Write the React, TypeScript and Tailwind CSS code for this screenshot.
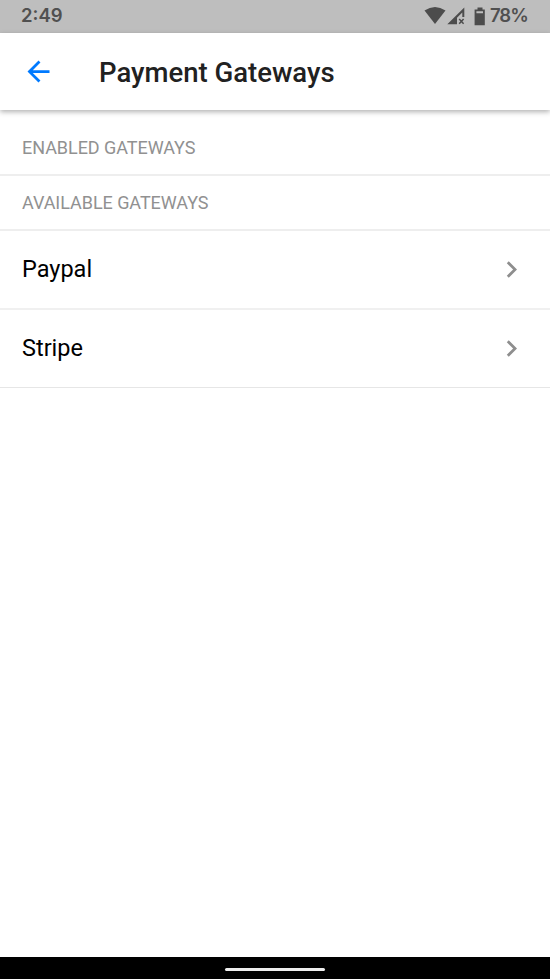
const rows = [
  { name: 'Paypal', line: 'h-[79px] border-b-2 border-[#f0f0f0]' },
  { name: 'Stripe', line: 'h-[78px] border-b border-[#e6e6e6]' },
];

export default function App() {
  return (
    <div className="flex h-[979px] w-[550px] flex-col bg-white font-['Roboto',sans-serif] text-black">
      <div className="flex h-[33px] items-center bg-[#bebebe] pr-[22px] pl-[21px] font-['Inter',sans-serif] text-[18.5px] font-semibold text-[#505050]">
        <span className="grow pb-[2px] leading-[31px]">2:49</span>
        <svg className="mr-px shrink-0" width="65" height="33" viewBox="0 0 65 33" fill="#4c4c4c">
          <path d="M0.5 10.6Q11 3.4 21.5 10.6L11 24Z" />
          <path d="M40.3 7.5V17H38.3V12.5L33 17.8V24.3H23.3Z" />
          <path d="M35.2 19L39.6 23.8M39.6 19L35.2 23.8" stroke="#4c4c4c" strokeWidth="1.5" />
          <path fillRule="evenodd" d="M53.5 7.6h5v1.9h2.3V25.2H50.6V9.5h2.9zM52.4 11.3v2h6.6v-2z" />
        </svg>
        <span className="pb-[2px] leading-[31px] tracking-[-0.9px]">78%</span>
      </div>
      <header className="z-10 flex h-[77px] shrink-0 items-center shadow-[0_2px_5px_rgba(0,0,0,0.3)]">
        <svg className="ml-[22px]" width="33" height="33" viewBox="0 0 24 24" fill="#007aff">
          <path d="M20 11H7.83l5.59-5.59L12 4l-8 8 8 8 1.41-1.41L7.83 13H20v-2z" />
        </svg>
        <h1 className="ml-[44px] pt-[2px] text-[27.5px] font-medium text-[#212121]">Payment Gateways</h1>
      </header>
      <h2 className="flex h-[66px] items-center border-b-2 border-[#eeeeee] px-[22px] pt-[11px] text-[18px] tracking-[-0.05px] text-[#919191]">ENABLED GATEWAYS</h2>
      <h2 className="flex h-[55px] items-center border-b-2 border-[#eeeeee] px-[22px] pb-[1px] text-[18px] tracking-[-0.05px] text-[#919191]">AVAILABLE GATEWAYS</h2>
      {rows.map(({ name, line }) => (
        <div key={name} className={`flex items-center justify-between px-[22px] text-[23.5px] ${line}`}>
          <span className="pt-[1px]">{name}</span>
          <svg width="33" height="33" viewBox="0 0 24 24" fill="#8e8e8e">
            <path d="M10 6L8.59 7.41 13.17 12l-4.58 4.59L10 18l6-6z" />
          </svg>
        </div>
      ))}
      <div className="mt-auto flex h-[22px] items-center justify-center bg-black pt-[2px]">
        <div className="h-[3px] w-[100px] rounded-full bg-[#eeeeee]" />
      </div>
    </div>
  );
}
